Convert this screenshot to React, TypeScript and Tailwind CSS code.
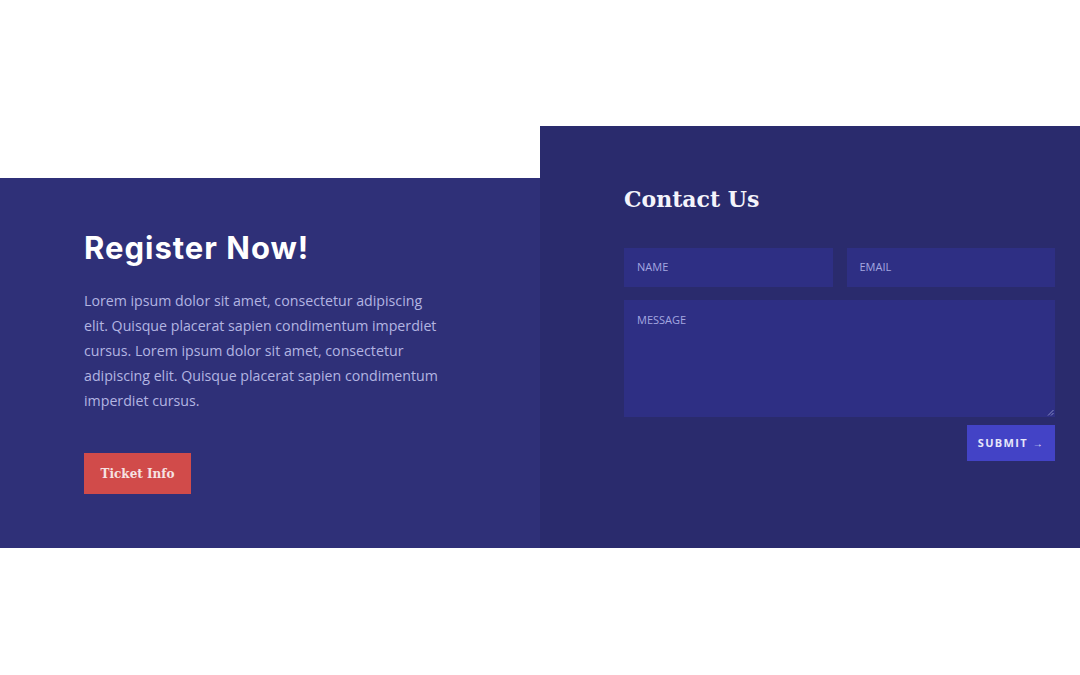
import React from "react";

export default function App() {
  return (
    <div className="w-[1080px] h-[675px] bg-white flex flex-col">
      <div className="h-[126px] shrink-0" />
      <div className="flex items-end h-[422px]">
        <div className="w-[540px] h-[370px] bg-[#2f3078] pl-[84px] pt-[50px]">
          <h1 className="text-[31px] leading-[40px] font-bold text-white tracking-[1px]" style={{ fontFamily: "Inter, 'Open Sans', sans-serif" }}>
            Register Now!
          </h1>
          <p className="mt-[20px] w-[362px] text-[14.2px] leading-[25px] text-[#b3b5e2]" style={{ fontFamily: "'Open Sans', sans-serif" }}>
            Lorem ipsum dolor sit amet, consectetur adipiscing elit. Quisque placerat sapien condimentum imperdiet cursus. Lorem ipsum dolor sit amet, consectetur adipiscing elit. Quisque placerat sapien condimentum imperdiet cursus.
          </p>
          <button className="mt-[40px] w-[107px] h-[41px] bg-[#d14b4a] text-[#f6e2e2] text-[12px] font-bold" style={{ fontFamily: "'DejaVu Serif', 'Liberation Serif', serif" }}>
            Ticket Info
          </button>
        </div>
        <div className="w-[540px] h-[422px] bg-[#2a2b6d] pl-[84px] pr-[25px] pt-[56px]">
          <h2 className="text-[22px] leading-[34px] font-bold text-[#f4f4fb]" style={{ fontFamily: "'DejaVu Serif', 'Liberation Serif', serif" }}>
            Contact Us
          </h2>
          <div className="mt-[32px] flex gap-[14px]">
            <div className="flex-1 h-[39px] bg-[#2e2f84] flex items-center pl-[13px] text-[11px] text-[#a4a7e0]" style={{ fontFamily: "'Open Sans', sans-serif" }}>NAME</div>
            <div className="flex-1 h-[39px] bg-[#2e2f84] flex items-center pl-[13px] text-[11px] text-[#a4a7e0]" style={{ fontFamily: "'Open Sans', sans-serif" }}>EMAIL</div>
          </div>
          <div className="relative mt-[13px] h-[117px] bg-[#2e2f84] pl-[13px] pt-[12px] text-[11px] text-[#a4a7e0]" style={{ fontFamily: "'Open Sans', sans-serif" }}>
            MESSAGE
            <svg className="absolute right-[1px] bottom-[1px]" width="7" height="7" viewBox="0 0 7 7">
              <path d="M6.5 1 L1 6.5 M6.5 4 L4 6.5" stroke="#9fa2d6" strokeWidth="0.8" />
            </svg>
          </div>
          <div className="flex justify-end mt-[8px]">
            <button className="w-[88px] h-[36px] bg-[#4343c6] text-[#e6e6fa] text-[11px] font-bold tracking-[1.3px] flex items-center justify-center gap-[5px]" style={{ fontFamily: "'Open Sans', sans-serif" }}>
              SUBMIT
              <span className="text-[10px] font-normal">→</span>
            </button>
          </div>
        </div>
      </div>
      <div className="flex-1" />
    </div>
  );
}
